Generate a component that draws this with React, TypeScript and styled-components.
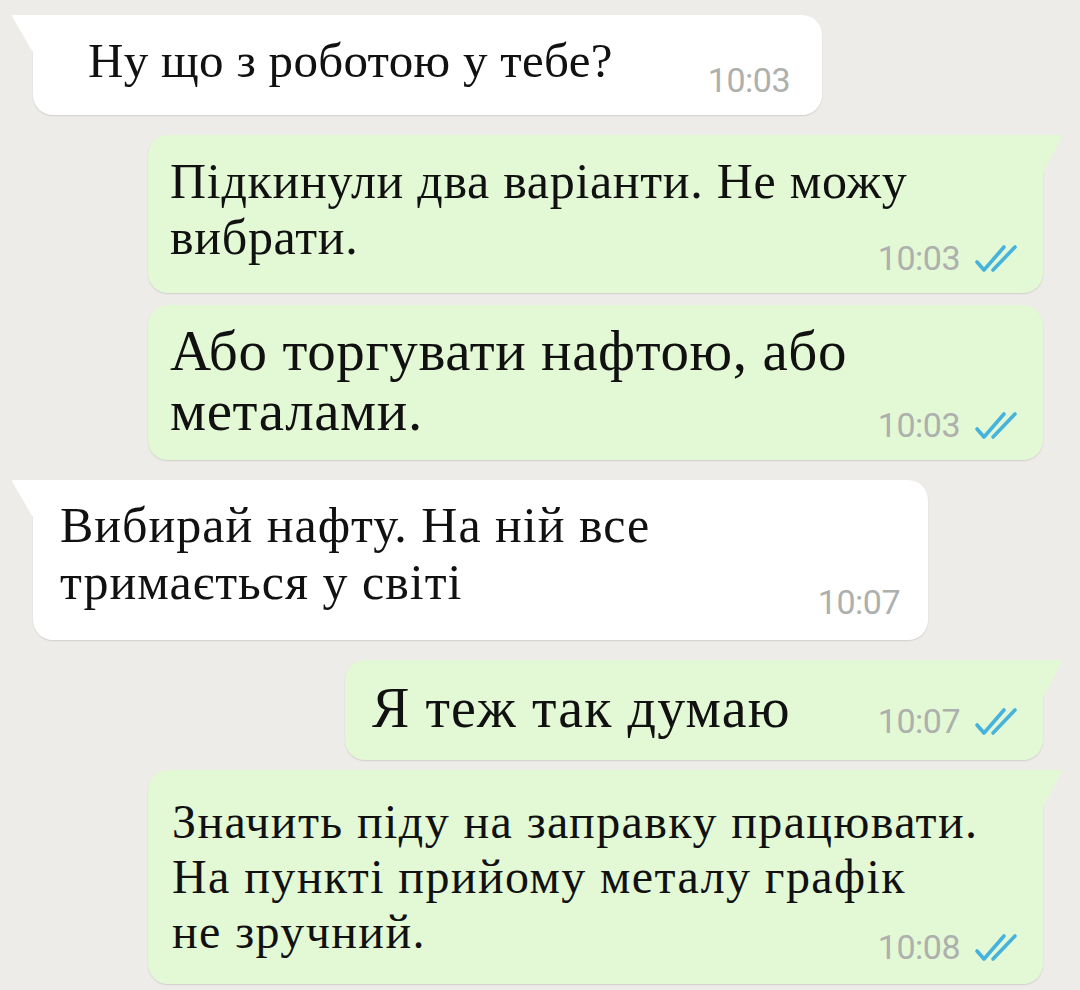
import React from "react";
import styled, { createGlobalStyle, css } from "styled-components";

const Global = createGlobalStyle`
  html, body { margin: 0; padding: 0; background: #edece8; }
  body { width: 1080px; height: 990px; overflow: hidden; }
`;

type Side = "in" | "out";

interface Msg {
  side: Side;
  lines: string[];
  time: string;
  w: number;
  fs: number;
  ls: number;
  lh: number;
  pt: number;
  pb: number;
  pl: number;
  pr: number;
  mb: number;
  gap: number;
  tail: boolean;
}

const messages: Msg[] = [
  { side: "in", lines: ["Ну що з роботою у тебе?"], time: "10:03", w: 789, fs: 49, ls: 0.3, lh: 55, pt: 18, pb: 18, pl: 55, pr: 32, mb: 9, gap: 0, tail: true },
  { side: "out", lines: ["Підкинули два варіанти. Не можу", "вибрати."], time: "10:03", w: 895, fs: 50, ls: 0.7, lh: 56, pt: 18, pb: 18, pl: 22, pr: 25, mb: 10, gap: 20, tail: true },
  { side: "out", lines: ["Або торгувати нафтою, або", "металами."], time: "10:03", w: 895, fs: 57, ls: 0.6, lh: 60, pt: 16, pb: 18, pl: 22, pr: 25, mb: 1, gap: 12, tail: false },
  { side: "in", lines: ["Вибирай нафту. На ній все", "тримається у світі"], time: "10:07", w: 895, fs: 50, ls: 1, lh: 57, pt: 17, pb: 21, pl: 27, pr: 28, mb: 8, gap: 20, tail: true },
  { side: "out", lines: ["Я теж так думаю"], time: "10:07", w: 698, fs: 56, ls: 1.1, lh: 58, pt: 19, pb: 22, pl: 27, pr: 25, mb: 1, gap: 20, tail: true },
  { side: "out", lines: ["Значить піду на заправку працювати.", "На пункті прийому металу графік", "не зручний."], time: "10:08", w: 895, fs: 48, ls: 1.4, lh: 55, pt: 24, pb: 20, pl: 24, pr: 25, mb: 5, gap: 10, tail: true },
];

const Chat = styled.div`
  display: flex;
  flex-direction: column;
  padding: 15px 37px 0 33px;
`;

const Bubble = styled.div<{ $side: Side; $w: number; $pt: number; $pb: number; $pl: number; $pr: number; $gap: number; $tail: boolean }>`
  position: relative;
  box-sizing: border-box;
  display: grid;
  grid-template-columns: 1fr;
  grid-template-rows: auto;
  width: ${(p) => p.$w}px;
  margin-top: ${(p) => p.$gap}px;
  padding: ${(p) => `${p.$pt}px ${p.$pr}px ${p.$pb}px ${p.$pl}px`};
  align-self: ${(p) => (p.$side === "in" ? "flex-start" : "flex-end")};
  background: ${(p) => (p.$side === "in" ? "#ffffff" : "#e3f8d5")};
  border-radius: 20px;
  box-shadow: 0 1px 1.5px rgba(0, 0, 0, 0.12);
  ${(p) =>
    p.$tail &&
    (p.$side === "in"
      ? css`
          border-top-left-radius: 0;
          &::before {
            content: "";
            position: absolute;
            top: 0;
            left: -21px;
            width: 22px;
            height: 36px;
            background: #ffffff;
            clip-path: polygon(0 0, 100% 0, 100% 100%, 92% 100%, 4% 8%);
          }
        `
      : css`
          border-top-right-radius: 0;
          &::before {
            content: "";
            position: absolute;
            top: 0;
            right: -19px;
            width: 20px;
            height: 36px;
            background: #e3f8d5;
            clip-path: polygon(0 0, 100% 0, 96% 8%, 8% 100%, 0 100%);
          }
        `)}
`;

const Text = styled.div<{ $fs: number; $lh: number; $mb: number; $ls: number }>`
  grid-area: 1 / 1;
  justify-self: start;
  align-self: start;
  margin-bottom: ${(p) => p.$mb}px;
  font-family: "Liberation Serif", "Times New Roman", serif;
  font-size: ${(p) => p.$fs}px;
  line-height: ${(p) => p.$lh}px;
  letter-spacing: ${(p) => p.$ls}px;
  color: #111111;
  white-space: nowrap;
`;

const Line = styled.div``;

const Meta = styled.div`
  grid-area: 1 / 1;
  justify-self: end;
  align-self: end;
  display: flex;
  align-items: center;
  gap: 14px;
  height: 34px;
`;

const Time = styled.span`
  font-family: Roboto, "Liberation Sans", sans-serif;
  font-size: 34px;
  line-height: 34px;
  color: #adb0ac;
  letter-spacing: -0.5px;
`;

const Checks = () => (
  <svg width="44" height="30" viewBox="0 0 44 30" fill="none">
    <path d="M3 19 L10 27 L30 4" stroke="#45b3dc" strokeWidth="3.6" strokeLinecap="round" strokeLinejoin="round" />
    <path d="M19 27 L41 4" stroke="#45b3dc" strokeWidth="3.6" strokeLinecap="round" />
  </svg>
);

export default function App() {
  return (
    <>
      <Global />
      <Chat>
        {messages.map((m, i) => (
          <Bubble
            key={i}
            $side={m.side}
            $w={m.w}
            $pt={m.pt}
            $pb={m.pb}
            $pl={m.pl}
            $pr={m.pr}
            $gap={m.gap}
            $tail={m.tail}
          >
            <Text $fs={m.fs} $lh={m.lh} $mb={m.mb} $ls={m.ls}>
              {m.lines.map((l, j) => (
                <Line key={j}>{l}</Line>
              ))}
            </Text>
            <Meta>
              <Time>{m.time}</Time>
              {m.side === "out" && <Checks />}
            </Meta>
          </Bubble>
        ))}
      </Chat>
    </>
  );
}
